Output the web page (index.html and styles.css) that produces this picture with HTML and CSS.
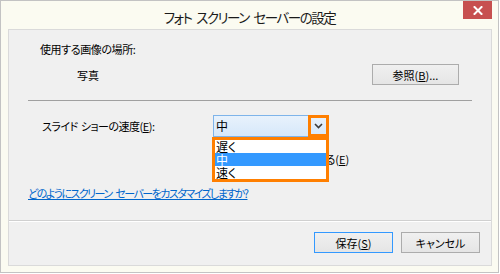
FILE: index.html
```html
<!DOCTYPE html>
<html lang="ja">
<head>
<meta charset="utf-8">
<title>フォト スクリーン セーバーの設定</title>
<link rel="stylesheet" href="styles.css">
</head>
<body>
<div class="window">
  <div class="titlebar">
    <span class="spacer"></span>
    <span class="title">フォト スクリーン セーバーの設定</span>
    <span class="close"><svg width="10" height="9" viewBox="0 0 10 9"><path d="M1.5 1 L8.5 8 M8.5 1 L1.5 8" stroke="#fff" stroke-width="2" stroke-linecap="square"/></svg></span>
  </div>
  <div class="panel">
    <div class="content">
      <div class="location">
        <div class="loc-label">使用する画像の場所:</div>
        <div class="loc-row">
          <span class="loc-value">写真</span>
          <button class="btn browse">参照(<u>B</u>)...</button>
        </div>
      </div>
      <div class="sep"></div>
      <div class="speed">
        <div class="speed-row">
          <span class="speed-label">スライド ショーの速度(<u>E</u>):</span>
          <div class="combo-wrap">
            <div class="combo">
              <span class="combo-value">中</span>
              <span class="combo-arrow"><svg width="9" height="6" viewBox="0 0 9 6"><path d="M1 1 L4.5 4.5 L8 1" fill="none" stroke="#3c3c3c" stroke-width="1.6"/></svg></span>
            </div>
            <ul class="dropdown">
              <li>遅く</li>
              <li class="selected">中</li>
              <li>速く</li>
            </ul>
          </div>
        </div>
        <div class="shuffle-row">
          <span class="checkbox"></span>
          <span class="shuffle-label">写真をシャッフルする(<u>E</u>)</span>
        </div>
      </div>
      <a class="help" href="#">どのようにスクリーン セーバーをカスタマイズしますか?</a>
    </div>
    <div class="buttons">
      <button class="btn default">保存(<u>S</u>)</button>
      <button class="btn">キャンセル</button>
    </div>
  </div>
</div>
</body>
</html>
```

FILE: styles.css
```css
* { box-sizing: border-box; }
html, body { margin: 0; padding: 0; }
body {
  background: #ffffff;
  font-family: "Noto Sans CJK JP", sans-serif;
  font-feature-settings: "palt";
  color: #000;
}
.window {
  width: 499px;
  height: 273px;
  border: 1px solid #c3c3c3;
  background: #fbfbf1;
  display: flex;
  flex-direction: column;
  padding: 0 6px 6px 7px;
}
.titlebar {
  height: 28px;
  display: grid;
  grid-template-columns: 1fr auto 1fr;
  margin: 0 -6px 0 -7px;
}
.title {
  font-size: 13.5px;
  letter-spacing: -1.45px;
  word-spacing: 3px;
  line-height: 16px;
  padding-top: 8px;
  color: #1a1a1a;
  white-space: nowrap;
}
.close {
  justify-self: end;
  align-self: start;
  width: 29px;
  height: 18px;
  margin-right: 6px;
  background: #c75050;
  display: flex;
  align-items: center;
  justify-content: center;
}
.panel {
  flex: 1;
  background: #f0f0f0;
  border: 1px solid #dadada;
  display: flex;
  flex-direction: column;
}
.content {
  flex: 1;
  padding: 12px 19px 0 19px;
  font-size: 11px;
  line-height: 14px;
}
.loc-label { padding-left: 12px; letter-spacing: -0.4px; }
.loc-row {
  margin-top: 8px;
  display: flex;
  align-items: center;
  padding-left: 49px;
  padding-right: 13px;
}
.loc-value { flex: 1; }
.btn {
  font-family: inherit;
  font-feature-settings: "palt";
  font-size: 11px;
  line-height: 14px;
  color: #000;
  height: 21px;
  padding: 0;
  border: 1px solid #acacac;
  background: linear-gradient(#f0f0f0, #e5e5e5);
  border-radius: 0;
}
.browse { width: 87px; }
.sep {
  height: 1px;
  background: #a0a0a0;
  margin-top: 15px;
}
.speed { padding-left: 14px; }
.speed-row {
  margin-top: 14px;
  display: grid;
  grid-template-columns: 171px 116px;
  align-items: center;
}
.speed-label { letter-spacing: -0.5px; word-spacing: 1px; }
.combo-wrap { position: relative; }
.combo {
  height: 22px;
  border: 1px solid #7eb4ea;
  background: linear-gradient(#e8f2fc, #d6e8fa);
  display: flex;
  align-items: center;
  font-size: 12px;
}
.combo-value { flex: 1; padding-left: 2px; }
.combo-arrow {
  width: 21px;
  height: 22px;
  margin: -1px -1px -1px 0;
  border: 3px solid #ff7f00;
  display: flex;
  align-items: center;
  justify-content: center;
}
.dropdown {
  position: absolute;
  left: -1px;
  top: 22px;
  width: 117px;
  margin: 0;
  padding: 0;
  list-style: none;
  border: 3px solid #ff7f00;
  background: #fff;
  font-size: 12px;
  line-height: 13px;
  z-index: 2;
}
.dropdown li { padding-left: 1px; height: 13px; }
.dropdown li.selected { background: #3399ff; color: #fff; }
.shuffle-row {
  margin-top: 15px;
  margin-left: 171px;
  display: flex;
  align-items: center;
  gap: 10px;
}
.checkbox {
  width: 13px;
  height: 13px;
  border: 1px solid #707070;
  background: #fff;
}
.help {
  display: inline-block;
  margin-top: 20px;
  color: #0066cc;
  letter-spacing: -1.55px;
  word-spacing: 3px;
  text-decoration: underline;
}
.buttons {
  height: 45px;
  border-top: 1px solid #d0d0d0;
  box-shadow: inset 0 1px #ffffff;
  display: flex;
  justify-content: flex-end;
  gap: 8px;
  padding: 11px 11px 0 0;
}
.buttons .btn { width: 79px; }
.btn.default { border-color: #3399ff; }
```
